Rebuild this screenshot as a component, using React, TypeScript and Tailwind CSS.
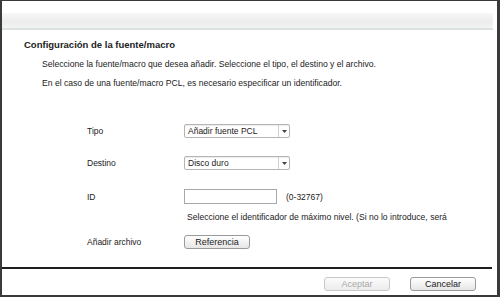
import React from "react";

function Select({ value }: { value: string }) {
  return (
    <div className="flex h-[14px] w-[106px] items-stretch rounded-[2px] border border-[#b5b5b5] bg-white shadow-[inset_0_1px_1px_rgba(0,0,0,0.08)]">
      <div className="flex flex-1 items-center pl-[3px] text-[8.5px] leading-none text-[#222]">{value}</div>
      <div className="flex w-[11px] items-center justify-center border-l border-[#d0d0d0]">
        <svg width="5" height="3" viewBox="0 0 5 3">
          <path d="M0 0 H5 L2.5 3 Z" fill="#444" />
        </svg>
      </div>
    </div>
  );
}

function Btn({ children, disabled }: { children: React.ReactNode; disabled?: boolean }) {
  return (
    <div
      className={
        "flex h-[14px] w-[66px] items-center justify-center rounded-[3px] border text-[9px] leading-none " +
        (disabled
          ? "border-[#c8c8c8] bg-[linear-gradient(#fbfbfb,#ececec)] text-[#a8a8a8]"
          : "border-[#9a9a9a] bg-[linear-gradient(#ffffff,#e6e6e6)] text-[#222]")
      }
    >
      {children}
    </div>
  );
}

export default function App() {
  return (
    <div
      className="flex h-[297px] w-[500px] flex-col border-b-2 border-l-2 border-r-[3px] border-t border-[#3a3a3a] bg-white text-[#222]"
      style={{ fontFamily: '"Liberation Sans", Arial, sans-serif' }}
    >
      <div className="mt-[12px] mr-[4px] h-[17px] border-b-2 border-[#dce2df] bg-[linear-gradient(#f7f7f7,#ececec_60%,#f4f4f4)]" />
      <div className="mt-[9px] pl-[22px] text-[9.5px] font-bold leading-[12px]">Configuración de la fuente/macro</div>
      <div className="mt-[7px] pl-[40px] text-[8.6px] leading-[12px]">
        Seleccione la fuente/macro que desea añadir. Seleccione el tipo, el destino y el archivo.
      </div>
      <div className="mt-[7px] pl-[40px] text-[8.6px] leading-[12px]">
        En el caso de una fuente/macro PCL, es necesario especificar un identificador.
      </div>

      <div className="mt-[35px] flex items-center">
        <div className="w-[182px] pl-[85px] text-[8.5px] leading-[12px]">Tipo</div>
        <Select value="Añadir fuente PCL" />
      </div>
      <div className="mt-[18px] flex items-center">
        <div className="w-[182px] pl-[85px] text-[8.5px] leading-[12px]">Destino</div>
        <Select value="Disco duro" />
      </div>
      <div className="mt-[19px] flex items-center">
        <div className="w-[182px] pl-[85px] text-[8.5px] leading-[12px]">ID</div>
        <div className="h-[15px] w-[93px] border border-[#a8a8a8] bg-white" />
        <div className="ml-[9px] text-[8.5px] leading-[12px]">(0-32767)</div>
      </div>
      <div className="mt-[7px] pl-[185px] text-[8.6px] leading-[12px]">
        Seleccione el identificador de máximo nivel. (Si no lo introduce, será
      </div>
      <div className="mt-[12px] flex items-center">
        <div className="w-[182px] pl-[85px] text-[8.5px] leading-[12px]">Añadir archivo</div>
        <Btn>Referencia</Btn>
      </div>

      <div className="mt-[18px] mr-[5px] h-[2px] bg-[#1e1e1e]" />
      <div className="mt-[8px] flex justify-end gap-[20px] pr-[21px]">
        <Btn disabled>Aceptar</Btn>
        <Btn>Cancelar</Btn>
      </div>
    </div>
  );
}
